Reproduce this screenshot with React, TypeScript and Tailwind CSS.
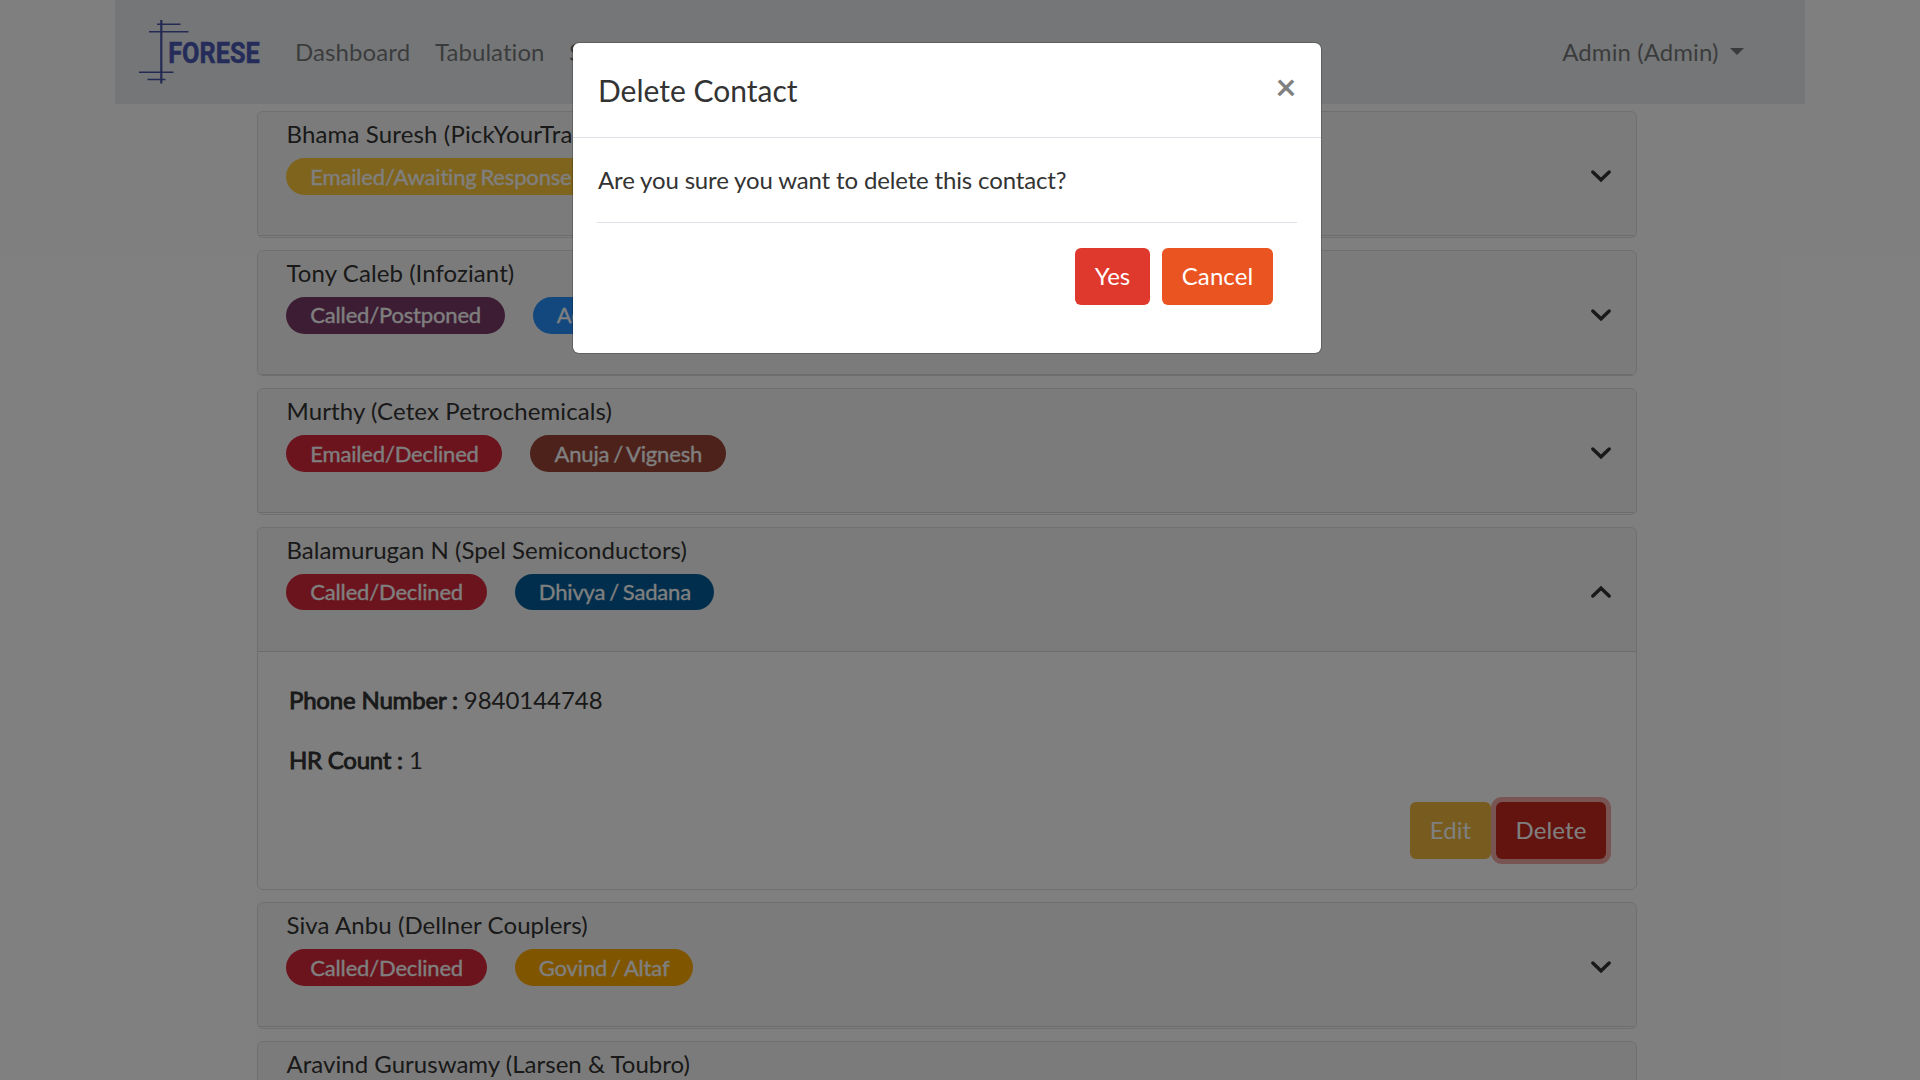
import React from "react";

type Contact = {
  name: string;
  nameClass: string;
  status: string;
  statusClass: string;
  owner: string;
  ownerClass: string;
  size: string;
  pillSize: string;
  open?: boolean;
};

const contacts: Contact[] = [
  { name: "Bhama Suresh (PickYourTrail)", nameClass: "tracking-[0.15px]", status: "Emailed/Awaiting Response", statusClass: "bg-[#ffc83d]", owner: "Admin", ownerClass: "bg-[#2691ff]", size: "h-[127px]", pillSize: "h-[37px]" },
  { name: "Tony Caleb (Infoziant)", nameClass: "tracking-[0.08px]", status: "Called/Postponed", statusClass: "bg-[#7b3b69]", owner: "Admin", ownerClass: "bg-[#2691ff]", size: "h-[126px]", pillSize: "h-[37px] pb-[2px]" },
  { name: "Murthy (Cetex Petrochemicals)", nameClass: "tracking-[0.11px]", status: "Emailed/Declined", statusClass: "bg-[#d7283a]", owner: "Anuja / Vignesh", ownerClass: "bg-[#9b4436]", size: "h-[127px]", pillSize: "h-[37px]" },
  { name: "Balamurugan N (Spel Semiconductors)", nameClass: "tracking-normal", status: "Called/Declined", statusClass: "bg-[#d7283a]", owner: "Dhivya / Sadana", ownerClass: "bg-[#005c98]", size: "h-[363px]", pillSize: "h-[36px] pb-[1px]", open: true },
  { name: "Siva Anbu (Dellner Couplers)", nameClass: "tracking-[0.08px]", status: "Called/Declined", statusClass: "bg-[#d7283a]", owner: "Govind / Altaf", ownerClass: "bg-[#ffab00]", size: "h-[127px]", pillSize: "h-[37px]" },
  { name: "Aravind Guruswamy (Larsen & Toubro)", nameClass: "tracking-[0.03px]", status: "Called/Declined", statusClass: "bg-[#d7283a]", owner: "Admin", ownerClass: "bg-[#2691ff]", size: "h-[127px]", pillSize: "h-[37px]" },
];

function Logo() {
  return (
    <svg width="124" height="66" viewBox="0 0 124 66" className="mt-[19px] ml-[24px] shrink-0 overflow-visible">
      <g stroke="#4656a8" strokeWidth="1.5" fill="none">
        <path d="M22.3 1V64.5" strokeWidth="2.2" />
        <path d="M18 5.3H41.5M10 12.7H49.5M0 53.3H34.5M8.500 60.500H26.500" />
      </g>
      <text x="29.200" y="43.800" fontFamily="Roboto" fontWeight="700" fontSize="30" fill="#4a58b4" stroke="#4a58b4" strokeWidth="0.500" textLength="91.500" lengthAdjust="spacingAndGlyphs">
        FORESE
      </text>
    </svg>
  );
}

function Chevron({ up }: { up?: boolean }) {
  return (
    <svg width="22" height="14" viewBox="0 0 22 14" fill="none" stroke="#333" strokeWidth="3.4" strokeLinecap="round" className="mr-[24px] mt-[4px]">
      <path d={up ? "M2.800 11L11 3.200L19.200 11" : "M2.800 3L11 10.800L19.200 3"} strokeLinejoin="miter" />
    </svg>
  );
}

function Pill({ text, className }: { text: string; className: string }) {
  return (
    <span className={"flex items-center rounded-full pr-[23.5px] pl-[24.3px] text-[22px] leading-none tracking-[-0.17px] text-white whitespace-nowrap [word-spacing:-1.600px] [-webkit-text-stroke:0.3px_white] " + className}>
      {text}
    </span>
  );
}

function Card({ c }: { c: Contact }) {
  return (
    <section className={"flex flex-col shrink-0 overflow-hidden rounded-[6px] border border-black/[.125] " + c.size}>
      <header className="flex h-[124px] shrink-0 items-center justify-between border-b border-black/[.125] bg-black/[.03]">
        <div className="flex h-full flex-col pl-[28px]">
          <h3 className={"mt-[4px] ml-[0.500px] h-[36px] text-[24px] leading-[36px] text-[#333] " + c.nameClass}>{c.name}</h3>
          <div className="mt-[6px] flex gap-[28px]">
            <Pill text={c.status} className={c.statusClass + " " + c.pillSize} />
            <Pill text={c.owner} className={c.ownerClass + " " + c.pillSize} />
          </div>
        </div>
        <Chevron up={c.open} />
      </header>
      {c.open && (
        <div className="flex flex-1 flex-col pl-[31px] text-[24px] leading-[36px] text-[#333]">
          <p className="mt-[30px]"><span className="tracking-[-0.18px] [-webkit-text-stroke:0.9px_#333]">Phone Number :</span><span className="tracking-[-0.050px]"> 9840144748</span></p>
          <p className="mt-[24px]"><span className="tracking-[-0.25px] [-webkit-text-stroke:0.9px_#333]">HR Count :</span> 1</p>
          <div className="mt-[24px] mr-[30px] flex justify-end gap-[5px]">
            <button className="h-[57px] w-[81px] rounded-[6px] bg-[#efb73e] pb-[2px] tracking-[0.1px] text-white">Edit</button>
            <button className="h-[57px] w-[110px] rounded-[6px] bg-[#c7291e] pb-[2px] tracking-[0.1px] text-white shadow-[0_0_0_5px_rgba(228,86,76,0.5)]">Delete</button>
          </div>
        </div>
      )}
    </section>
  );
}

export default function App() {
  return (
    <div className="relative h-[1080px] w-[1920px] overflow-hidden bg-white font-['Lato',sans-serif]">
      <nav className="mx-[115px] flex h-[104px] bg-[#e9ecef] text-[24px] leading-[36px] text-black/50">
        <Logo />
        <a className="mt-[34px] ml-[32px] w-[140px] tracking-[0.1px]">Dashboard</a>
        <a className="mt-[34px] w-[134px] tracking-[0.050px]">Tabulation</a>
        <a className="mt-[34px]">Statistics</a>
        <span className="mt-[34px] mr-[61.5px] ml-auto flex tracking-[0.08px]">
          Admin (Admin)
          <span className="mt-[14px] ml-[11px] h-0 w-0 border-x-[7.5px] border-t-[7px] border-x-transparent border-t-black/50" />
        </span>
      </nav>
      <main className="mt-[7px] ml-[257px] flex w-[1380px] flex-col gap-[12px]">
        {contacts.map((c) => (
          <Card key={c.name} c={c} />
        ))}
      </main>
      <div className="absolute inset-0 bg-black/50">
        <div role="dialog" className="mx-auto mt-[42px] flex h-[312px] w-[750px] translate-x-[-13px] flex-col rounded-[7px] border border-black/20 bg-white bg-clip-padding text-[24px] leading-[36px] text-[#333]">
          <div className="flex h-[95px] shrink-0 border-b border-[#dee2e6] pt-[25px] pl-[25px]">
            <h5 className="text-[30px] leading-[45px]">Delete Contact</h5>
            <button className="mr-[24.5px] ml-auto h-[36px] text-[36px] leading-[24px] font-bold text-[#808080]">×</button>
          </div>
          <p className="mt-[24px] ml-[25px] tracking-[-0.15px]">Are you sure you want to delete this contact?</p>
          <div className="mx-[24px] mt-[24px] flex justify-end gap-[12px] border-t border-[#dee2e6] pt-[25px] pr-[24px]">
            <button className="h-[57px] w-[75px] rounded-[6px] bg-[#df382c] pb-[2px] text-white">Yes</button>
            <button className="h-[57px] w-[111px] rounded-[6px] bg-[#e95420] pb-[2px] tracking-[0.1px] text-white">Cancel</button>
          </div>
        </div>
      </div>
    </div>
  );
}
